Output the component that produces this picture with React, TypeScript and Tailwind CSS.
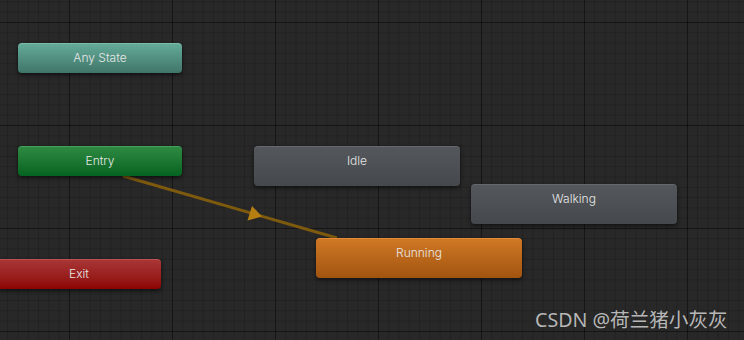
import React from "react";

/* ---------------------------------------------
   STATE NODES
--------------------------------------------- */

type Node = {
  label: string;
  pos: string;
  size: string;
  skin: string;
};

const nodes: Node[] = [
  {
    label: "Any State",
    pos: "left-[18px] top-[43px]",
    size: "w-[164px] h-[30px]",
    skin: "bg-linear-to-b from-[#64aa98] to-[#407669] border-t-[#7cbcaa]",
  },
  {
    label: "Entry",
    pos: "left-[18px] top-[146px]",
    size: "w-[164px] h-[30px]",
    skin: "bg-linear-to-b from-[#2d8a42] to-[#036320] border-t-[#46a05a]",
  },
  {
    label: "Exit",
    pos: "left-[-3px] top-[259px]",
    size: "w-[164px] h-[30px]",
    skin: "bg-linear-to-b from-[#a83535] to-[#8c0202] border-t-[#c05050]",
  },
  {
    label: "Idle",
    pos: "left-[254px] top-[146px]",
    size: "w-[206px] h-[40px]",
    skin: "bg-linear-to-b from-[#54575b] to-[#45484c] border-t-[#65686c]",
  },
  {
    label: "Walking",
    pos: "left-[471px] top-[184px]",
    size: "w-[206px] h-[40px]",
    skin: "bg-linear-to-b from-[#54575b] to-[#45484c] border-t-[#65686c]",
  },
  {
    label: "Running",
    pos: "left-[316px] top-[238px]",
    size: "w-[206px] h-[40px]",
    skin: "bg-linear-to-b from-[#cf7824] to-[#a25410] border-t-[#e08a3a]",
  },
];

function StateNode({ node }: { node: Node }) {
  return (
    <div
      className={`absolute ${node.pos} ${node.size} ${node.skin} rounded-[4px] border-t border-transparent shadow-[0_2px_4px_rgba(0,0,0,0.55)]`}
    >
      <div className="h-[27px] flex items-center justify-center text-[12px] font-light text-[#e8e8e8]">
        {node.label}
      </div>
    </div>
  );
}

/* ---------------------------------------------
   TRANSITION ARROW
--------------------------------------------- */

function Transition() {
  return (
    <svg className="absolute left-0 top-0" width={744} height={340}>
      <line
        x1={123}
        y1={176}
        x2={337}
        y2={238}
        stroke="#7e5a0e"
        strokeWidth={3}
      />
      <polygon points="262,216.5 247.5,220.5 252,206" fill="#b67f12" />
    </svg>
  );
}

export default function App() {
  return (
    <div
      className="relative w-[744px] h-[340px] overflow-hidden bg-[#282828] bg-[image:linear-gradient(to_right,rgba(0,0,0,0.38)_1px,transparent_1px),linear-gradient(to_bottom,rgba(0,0,0,0.38)_1px,transparent_1px),linear-gradient(to_right,rgba(0,0,0,0.15)_1px,transparent_1px),linear-gradient(to_bottom,rgba(0,0,0,0.15)_1px,transparent_1px)] bg-size-[103px_103px,103px_103px,10.3px_10.3px,10.3px_10.3px] bg-position-[69px_22px]"
      style={{ fontFamily: "Inter, 'Noto Sans', sans-serif" }}
    >
      <Transition />

      {nodes.map((n) => (
        <StateNode key={n.label} node={n} />
      ))}

      {/* watermark */}
      <div
        className="absolute left-[535px] top-[306px] text-[19.6px] leading-[28px] text-[#d2d2d2]/85 whitespace-nowrap"
        style={{ fontFamily: "'Noto Sans', 'Noto Sans CJK SC', sans-serif" }}
      >
        CSDN @荷兰猪小灰灰
      </div>
    </div>
  );
}
